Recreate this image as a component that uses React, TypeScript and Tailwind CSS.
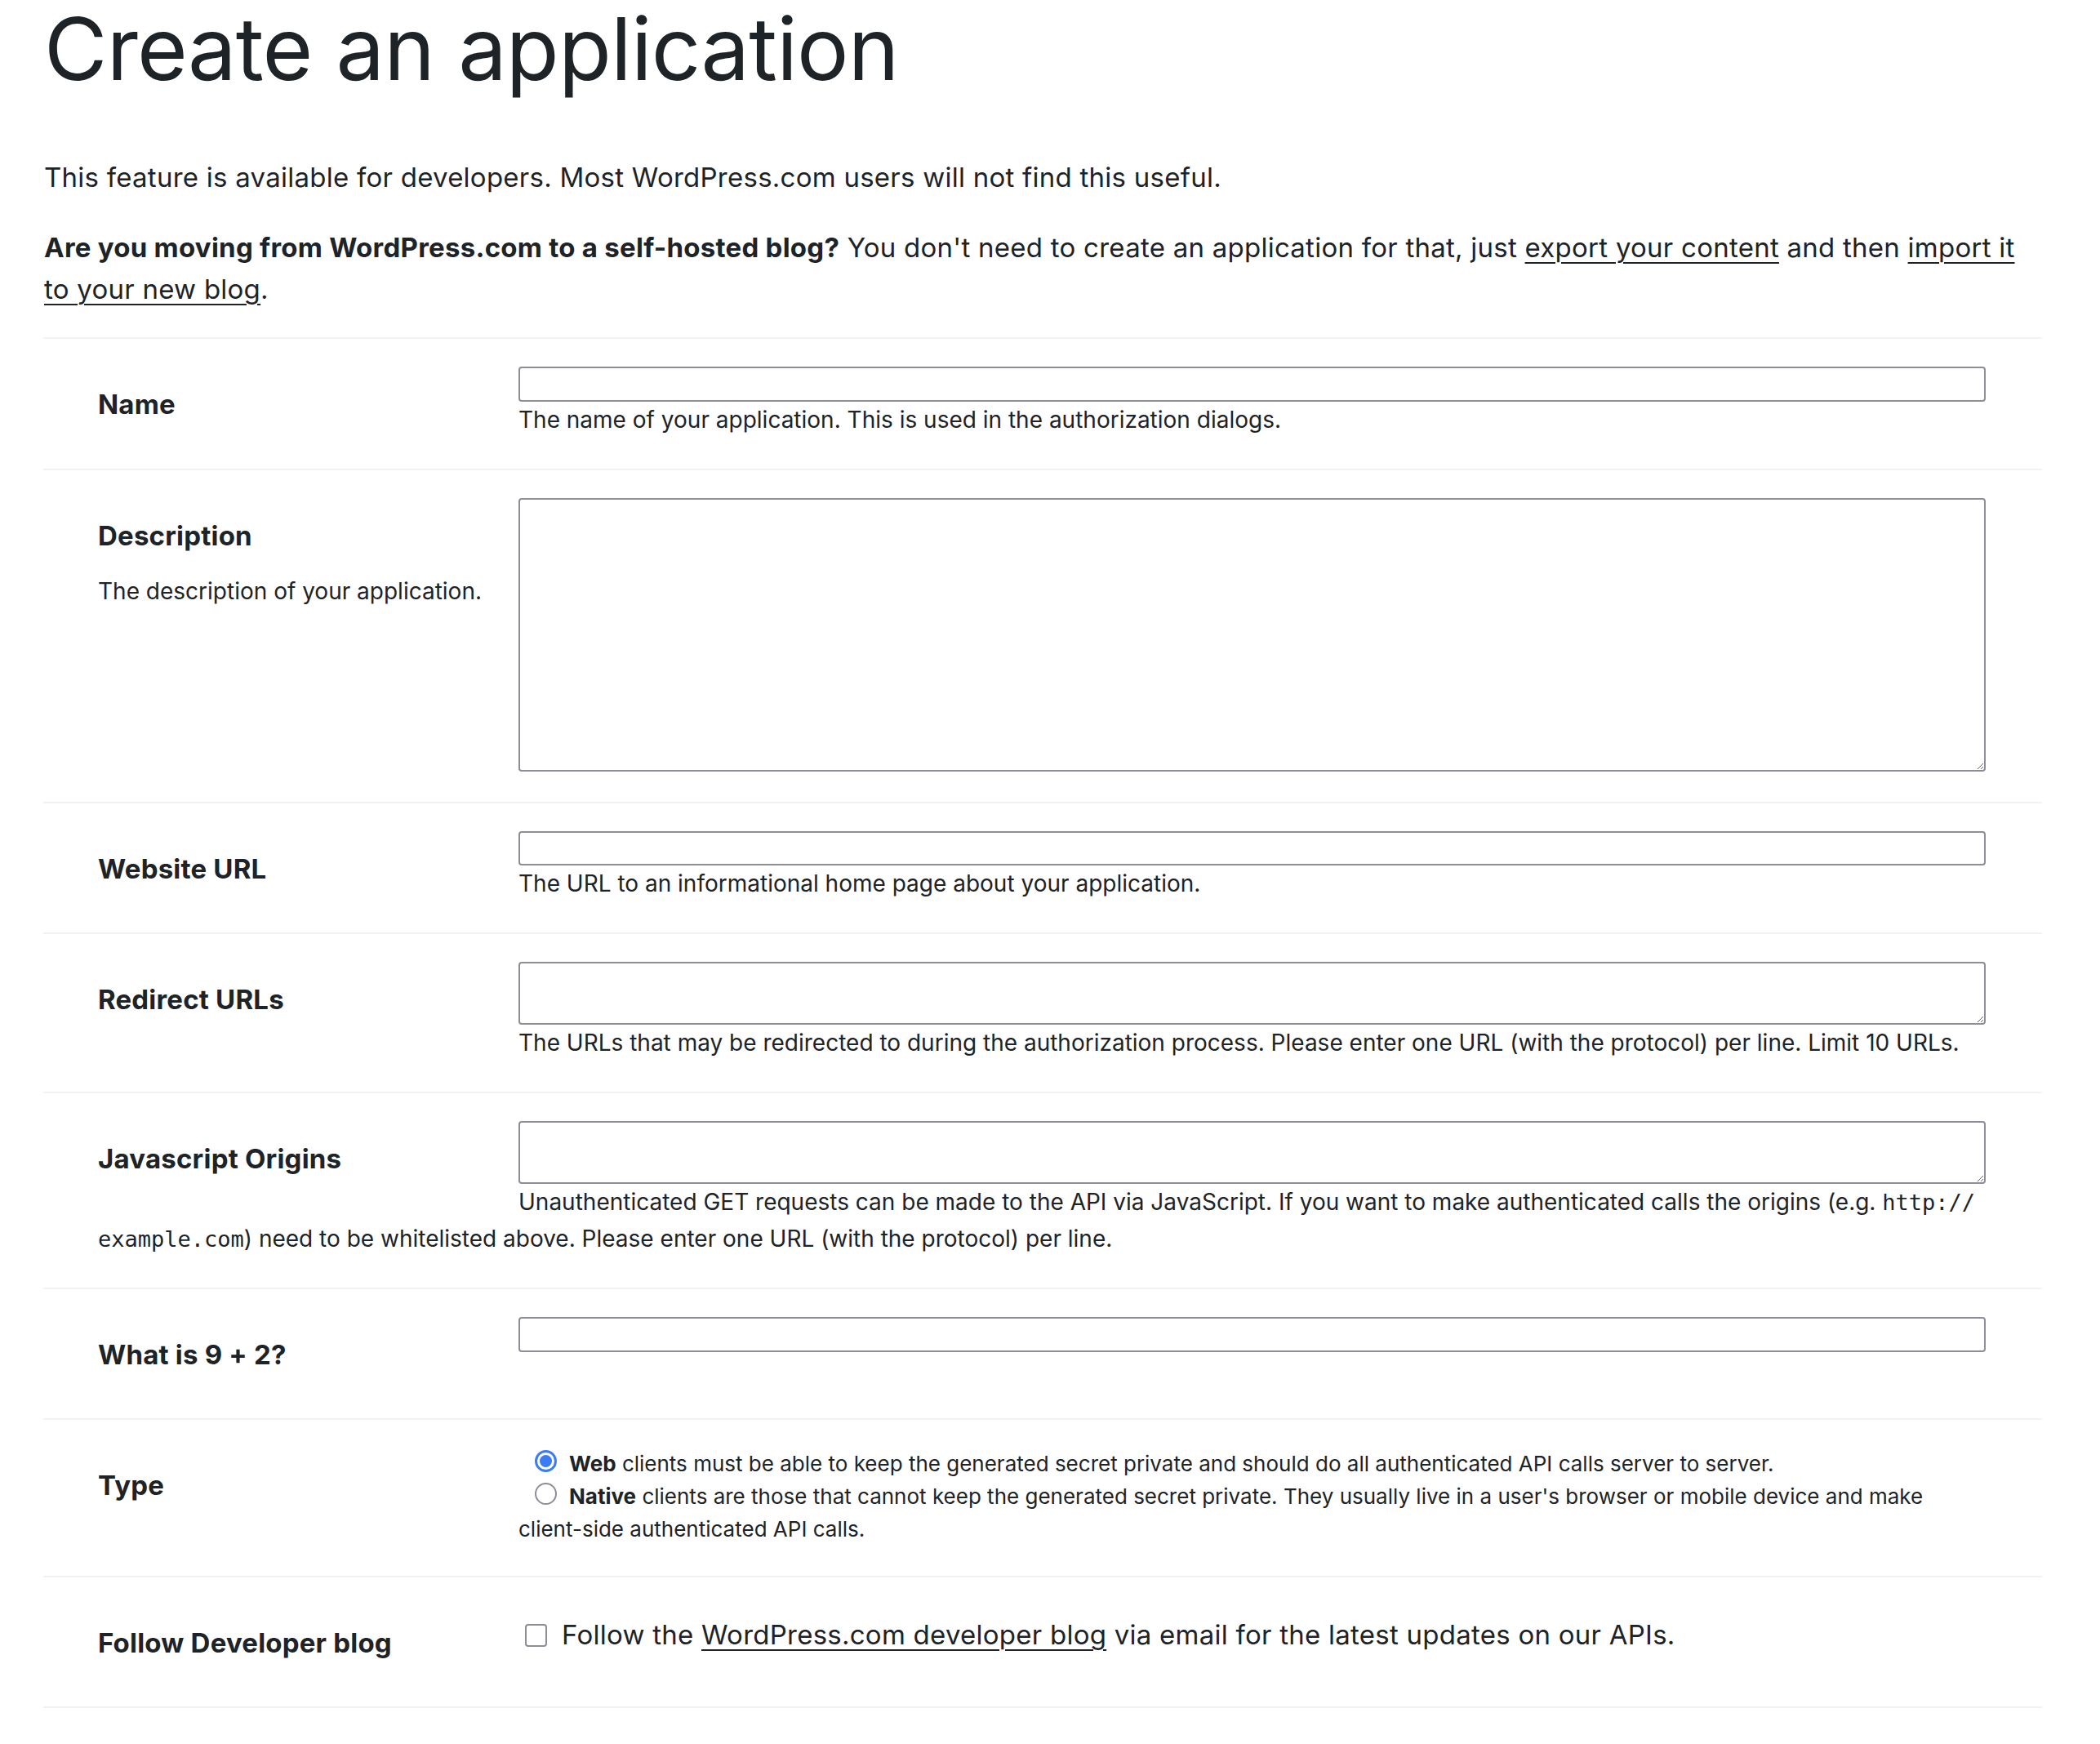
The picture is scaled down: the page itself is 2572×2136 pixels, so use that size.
import type { ReactNode } from "react";

const ink = "text-[#1d2327]";
const body = "text-[33px] tracking-[0.25px] leading-[51px]";

function Row({ label, hint, children }: { label: string; hint?: string; children: ReactNode }) {
  return (
    <div className="flow-root border-b-2 border-[#f2f2f2] pl-[67px] pr-[69px] pt-[34px] pb-[37px]">
      <div className="float-left w-[515px] min-h-[87px] pt-[24px]">
        <div className="text-[33px] tracking-[0.2px] font-bold leading-[45px]">{label}</div>
        {hint && <p className="mt-[23px] text-[28px] leading-[45px]">{hint}</p>}
      </div>
      {children}
    </div>
  );
}

function Field({ height, area }: { height: number; area?: boolean }) {
  const cls =
    "block w-full rounded-[4px] border-2 border-[#8e8d97] bg-white outline-none";
  return (
    <div className="ml-[515px]">
      {area ? (
        <textarea className={cls + " resize-y"} style={{ height }} />
      ) : (
        <input type="text" className={cls} style={{ height }} />
      )}
    </div>
  );
}

function Help({ children }: { children: ReactNode }) {
  return <p className="text-[28px] leading-[45px]">{children}</p>;
}

function Radio({ checked }: { checked?: boolean }) {
  return checked ? (
    <span className="ml-[20px] mr-[15px] inline-block h-[27px] w-[27px] rounded-full border-[3px] border-[#3b7cf4] bg-white align-[-1px]">
      <span className="m-[3px] block h-[15px] w-[15px] rounded-full bg-[#3b7cf4]" />
    </span>
  ) : (
    <span className="ml-[20px] mr-[15px] inline-block h-[27px] w-[27px] rounded-full border-2 border-[#8e8d97] bg-white align-[-1px]" />
  );
}

export default function App() {
  return (
    <div
      className={`min-h-screen bg-white ${ink}`}
      style={{ fontFamily: "Inter, 'Noto Sans', sans-serif" }}
    >
      <div className="ml-[53px] w-[2448px]">
        <h1 className="mt-[2px] pl-[1px] text-[106px] tracking-[-0.8px] font-normal leading-[116px]">
          Create an application
        </h1>

        <p className={`mt-[74px] pl-[1px] ${body}`}>
          This feature is available for developers. Most WordPress.com users will not find this useful.
        </p>
        <p className={`mt-[35px] pl-[1px] ${body}`}>
          <strong className="font-bold">Are you moving from WordPress.com to a self-hosted blog?</strong>{" "}
          You don't need to create an application for that, just{" "}
          <a href="#" className="underline underline-offset-[6px] decoration-2">
            export your content
          </a>{" "}
          and then{" "}
          <a href="#" className="underline underline-offset-[6px] decoration-2">
            import it to your new blog
          </a>
          .
        </p>

        <form className="mt-[33px] border-t-2 border-[#f2f2f2]">
          <Row label="Name">
            <Field height={43} />
            <Help>The name of your application. This is used in the authorization dialogs.</Help>
          </Row>

          <Row label="Description" hint="The description of your application.">
            <Field height={335} area />
          </Row>

          <Row label="Website URL">
            <Field height={42} />
            <Help>The URL to an informational home page about your application.</Help>
          </Row>

          <Row label="Redirect URLs">
            <Field height={77} area />
            <Help>
              The URLs that may be redirected to during the authorization process. Please enter one URL
              (with the protocol) per line. Limit 10 URLs.
            </Help>
          </Row>

          <Row label="Javascript Origins">
            <Field height={77} area />
            <Help>
              Unauthenticated GET requests can be made to the API via JavaScript. If you want to make
              authenticated calls the origins (e.g.{" "}
              <code
                style={{ fontFamily: "'DejaVu Sans Mono', monospace" }}
                className="text-[27px] leading-none"
              >
                http://
                <wbr />
                example.com
              </code>
              ) need to be whitelisted above. Please enter one URL (with the protocol) per line.
            </Help>
          </Row>

          <Row label="What is 9 + 2?">
            <Field height={43} />
          </Row>

          <Row label="Type">
            <div className="text-[26px] leading-[40px]">
              <Radio checked />
              <strong className="font-bold">Web</strong> clients must be able to keep the generated
              secret private and should do all authenticated API calls server to server.
              <br />
              <Radio />
              <strong className="font-bold">Native</strong> clients are those that cannot keep the
              generated secret private. They usually live in a user's browser or mobile device and make
              client-side authenticated API calls.
            </div>
          </Row>

          <Row label="Follow Developer blog">
            <p className={`mt-[11px] ${body}`}>
              <span className="ml-[8px] mr-[18px] inline-block h-[28px] w-[27px] rounded-[4px] border-2 border-[#8e8d97] bg-white align-[-3px]" />
              Follow the{" "}
              <a href="#" className="underline underline-offset-[6px] decoration-2">
                WordPress.com developer blog
              </a>{" "}
              via email for the latest updates on our APIs.
            </p>
          </Row>
        </form>
      </div>
    </div>
  );
}
